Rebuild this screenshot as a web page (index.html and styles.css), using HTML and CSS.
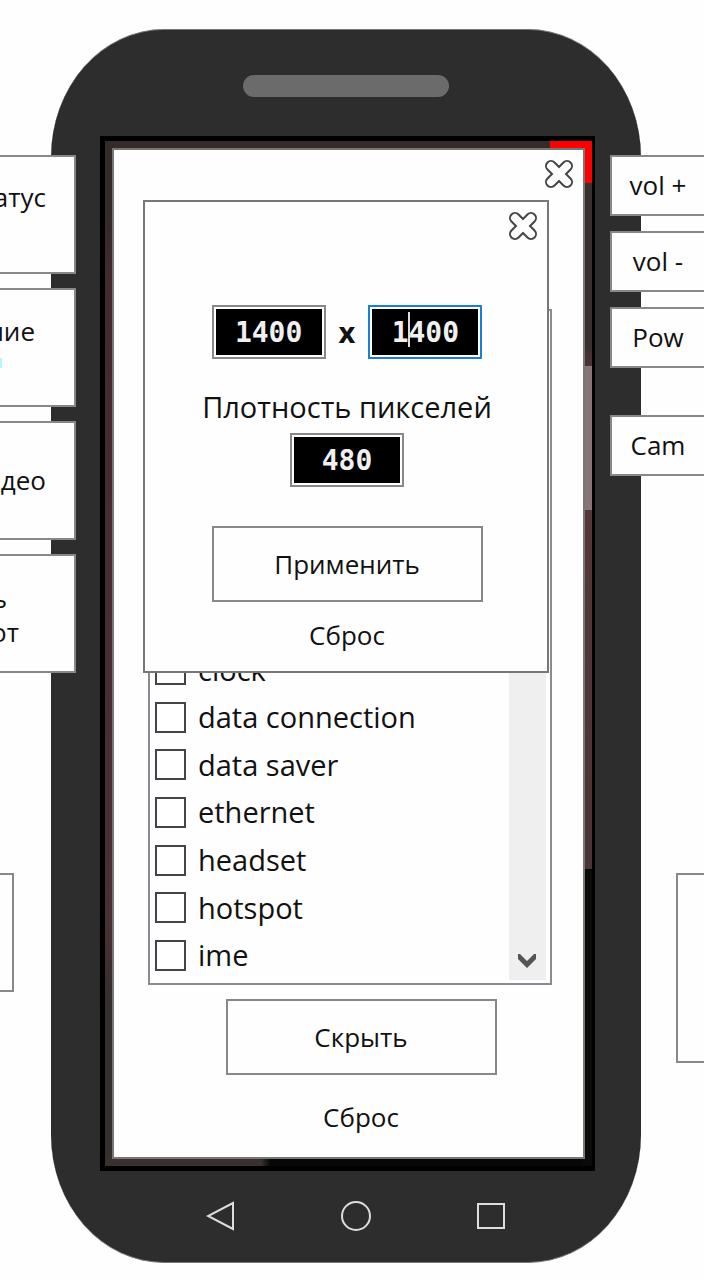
FILE: index.html
```html
<!DOCTYPE html>
<html lang="ru">
<head>
    <meta charset="UTF-8">
    <meta name="viewport" content="width=device-width, initial-scale=1.0">
    <title>Плотность пикселей</title>
    <link rel="stylesheet" href="styles.css">
</head>
<body>
    <div class="stage">
        <main class="phone">
            <div class="speaker"></div>
            <div class="screen">
                <div class="corner"></div>
                <section class="panel">
                    <button type="button" class="close" aria-label="Закрыть">
                        <svg viewBox="0 0 30 30"><path class="x-line" d="M7 7L23 23M23 7L7 23"/><path class="x-fill" d="M7 7L23 23M23 7L7 23"/></svg>
                    </button>
                    <div class="list">
                        <div class="items">
                            <label><input type="checkbox"> clock</label>
                            <label><input type="checkbox"> data connection</label>
                            <label><input type="checkbox"> data saver</label>
                            <label><input type="checkbox"> ethernet</label>
                            <label><input type="checkbox"> headset</label>
                            <label><input type="checkbox"> hotspot</label>
                            <label><input type="checkbox"> ime</label>
                        </div>
                        <div class="scrollbar">
                            <svg viewBox="0 0 18 14"><path d="M0 0H2L9 7L16 0H18V5L9 14L0 5Z"/></svg>
                        </div>
                    </div>
                    <div class="panel-actions">
                        <button type="button" class="btn">Скрыть</button>
                        <button type="button" class="btn-plain">Сброс</button>
                    </div>

                    <form class="dialog">
                        <button type="button" class="close" aria-label="Закрыть">
                            <svg viewBox="0 0 30 30"><path class="x-line" d="M7 7L23 23M23 7L7 23"/><path class="x-fill" d="M7 7L23 23M23 7L7 23"/></svg>
                        </button>
                        <div class="size-row">
                            <input type="text" class="num" value="1400" aria-label="Ширина">
                            <span class="times">x</span>
                            <div class="active-field">
                                <input type="text" class="num active" value="1400" aria-label="Высота">
                                <span class="caret"></span>
                            </div>
                        </div>
                        <label class="density-label" for="density">Плотность пикселей</label>
                        <input type="text" class="num" id="density" value="480">
                        <button type="button" class="btn">Применить</button>
                        <button type="button" class="btn-plain">Сброс</button>
                    </form>
                </section>
            </div>
            <nav class="nav">
                <button type="button" aria-label="Назад"><svg viewBox="0 0 30 30"><path d="M27 2V28L2 15Z"/></svg></button>
                <button type="button" aria-label="Домой"><svg viewBox="0 0 30 30"><circle cx="15" cy="15" r="14"/></svg></button>
                <button type="button" aria-label="Недавние"><svg viewBox="0 0 30 30"><path d="M2 3H28V27H2Z"/></svg></button>
            </nav>
        </main>

        <aside class="side side-left">
            <button type="button" class="key high">атус</button>
            <button type="button" class="key note"><span>ние</span><i class="dot"></i></button>
            <button type="button" class="key">део</button>
            <button type="button" class="key low"><span class="short">ь</span><span>от</span></button>
            <button type="button" class="key edge" aria-label="Слева"></button>
        </aside>

        <aside class="side side-right">
            <button type="button" class="key">vol +</button>
            <button type="button" class="key">vol -</button>
            <button type="button" class="key">Pow</button>
            <button type="button" class="key cam">Cam</button>
            <button type="button" class="key edge" aria-label="Справа"></button>
        </aside>
    </div>
</body>
</html>
```
FILE: styles.css
```css
* {
    box-sizing: border-box;
}
body {
    margin: 0;
    background-color: #fefefe;
    color: #111;
    font-family: "Open Sans", "Noto Sans", sans-serif;
    font-size: 26px;
    line-height: 32px;
    overflow-x: hidden;
}
button, input {
    font: inherit;
    color: inherit;
    margin: 0;
    padding: 0;
}
button {
    background: none;
    border: none;
    cursor: pointer;
}
svg {
    display: block;
}

/* side keys overlap the edges of the phone */
.stage {
    display: grid;
    grid-template-columns: 51px 25px 1fr 31px 63px;
    min-height: 1280px;
    align-items: start;
}
.phone {
    grid-area: 1 / 2 / 2 / 5;
    margin-top: 29px;
    padding: 45px 46px 0 49px;
    background-color: #2d2d2d;
    border: 1px solid #777;
    border-width: 1px 0;
    border-radius: 113px / 128px;
}
.speaker {
    width: 206px;
    height: 22px;
    margin: 0 auto 39px 143px;
    border-radius: 11px;
    background-color: #6b6b6b;
}
.screen {
    position: relative;
    padding: 7px;
    border: 5px solid #000;
    border-right-width: 3px;
    background:
        linear-gradient(#3a3030 20%, #4d3336 22%, #887577 22%, #887577 36%, #533739 36%, #4b3435 71%, #0a0b08 71%) right / 9px 100% no-repeat,
        linear-gradient(90deg, #3a3030 32%, #060807 34%) bottom / 100% 9px no-repeat,
        linear-gradient(#332b29 7%, #442a2c 14%, #4a3032 76%, #352e2f 84%);
}
.corner {
    position: absolute;
    top: 0;
    right: 0;
    width: 42px;
    height: 42px;
    background-color: #f00;
}

.panel {
    position: relative;
    padding: 0 31px 20px 34px;
    border: 2px solid #777;
    background-color: #fefefe;
}
.close {
    display: block;
    width: 30px;
    height: 30px;
    margin: 9px 0 0 auto;
}
.panel > .close {
    margin-right: -22px;
}
.x-line, .x-fill {
    fill: none;
    stroke: #444;
    stroke-width: 12;
    stroke-linecap: round;
}
.x-fill {
    stroke: #fefefe;
    stroke-width: 8;
}

.list {
    display: flex;
    align-items: flex-end;
    height: 676px;
    margin-top: 120px;
    padding: 3px 4px 3px 5px;
    border: 2px solid #888c92;
}
.items {
    flex: 1;
    display: grid;
    grid-auto-rows: 1fr;
    height: 333px;
    margin-bottom: 1px;
    font-size: 29px;
}
.items label {
    display: flex;
    align-items: center;
    gap: 12px;
    line-height: 30px;
}
.items input {
    appearance: none;
    width: 31px;
    height: 31px;
    border: 2px solid #444;
    background-color: #fff;
}
.scrollbar {
    display: flex;
    align-items: flex-end;
    justify-content: center;
    align-self: stretch;
    width: 37px;
    padding: 0 2px 12px 0;
    background-color: #efefef;
}
.scrollbar svg {
    width: 18px;
    height: 14px;
    fill: #555;
}

.btn {
    width: 271px;
    height: 76px;
    border: 2px solid #888;
}
.btn-plain {
    height: 40px;
    padding: 0 20px;
}
.panel-actions {
    display: flex;
    flex-direction: column;
    align-items: center;
    gap: 22px;
    margin-top: 14px;
    padding-left: 22px;
}

.dialog {
    position: absolute;
    top: 50px;
    left: 29px;
    right: 34px;
    display: flex;
    flex-direction: column;
    align-items: center;
    padding: 0 9px 16px 11px;
    border: 2px solid #777;
    background-color: #fefefe;
}
.size-row {
    display: flex;
    align-items: center;
    gap: 13px;
    margin-top: 64px;
}
.times {
    font-size: 29px;
    font-weight: bold;
}
.num {
    width: 114px;
    height: 54px;
    padding: 0;
    border: 2px solid #888;
    box-shadow: inset 0 0 0 2px #fff;
    background-color: #000;
    color: #f0f0f0;
    font-family: "DejaVu Sans Mono", monospace;
    font-size: 28px;
    font-weight: bold;
    text-align: center;
}
.active-field {
    position: relative;
    display: flex;
}
.active {
    border-color: #1a7fd4;
}
.caret {
    position: absolute;
    top: 7px;
    left: 40px;
    width: 2px;
    height: 35px;
    background-color: #ddd;
}
.density-label {
    margin: 32px 0 10px;
    font-size: 29px;
}
.dialog .btn {
    margin: 39px 0 13px;
}

.nav {
    display: flex;
    justify-content: center;
    gap: 105px;
    padding: 30px 0 31px 16px;
}
.nav svg {
    width: 30px;
    height: 30px;
    fill: none;
    stroke: #ddd;
    stroke-width: 2;
}

.side {
    display: flex;
    flex-direction: column;
    margin-top: 155px;
}
.side-left {
    grid-area: 1 / 1 / 2 / 3;
    gap: 14px;
}
.side-right {
    grid-area: 1 / 4 / 2 / 6;
    gap: 15px;
}
.key {
    display: flex;
    flex-direction: column;
    border: 2px solid #888;
    background-color: #fefefe;
}
.side-left .key {
    align-items: flex-end;
    justify-content: center;
    height: 119px;
    padding-right: 28px;
    padding-bottom: 2px;
    border-left: none;
}
.side-left .high {
    padding-bottom: 36px;
}
.side-left .note {
    padding-right: 39px;
}
.dot {
    align-self: flex-start;
    width: 2px;
    height: 10px;
    margin: 11px 0;
    background-color: #b5f6fb;
}
.side-left .low {
    gap: 2px;
    padding-right: 55px;
    padding-top: 4px;
}
.short {
    padding-right: 12px;
}
.side-left .edge {
    width: 14px;
    padding: 0;
    margin-top: 186px;
}
.side-right .key {
    align-items: center;
    justify-content: center;
    height: 61px;
    padding-bottom: 2px;
    border-right: none;
}
.side-right .cam {
    margin-top: 32px;
}
.side-right .edge {
    align-self: flex-end;
    width: 28px;
    height: 190px;
    padding: 0;
    margin-top: 382px;
}
```
